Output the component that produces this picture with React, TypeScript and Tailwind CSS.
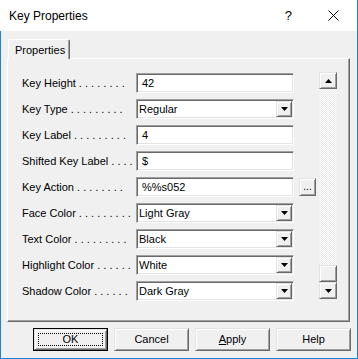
import React from 'react';

const sunken =
  'border border-t-[#a0a0a0] border-l-[#a0a0a0] border-r-white border-b-white shadow-[inset_1px_1px_0_#696969,inset_-1px_-1px_0_#e3e3e3] bg-white';
const raised =
  'border border-t-[#e3e3e3] border-l-[#e3e3e3] border-r-[#696969] border-b-[#696969] shadow-[inset_1px_1px_0_#ffffff,inset_-1px_-1px_0_#a0a0a0] bg-[#f0f0f0]';

const Arrow = ({ up }: { up?: boolean }) => (
  <svg width="7" height="4" viewBox="0 0 7 4">
    <polygon points={up ? '3.5,0 7,4 0,4' : '0,0 7,0 3.5,4'} fill="#000" />
  </svg>
);

type Row = { label: string; value: string; kind: 'text' | 'select' | 'action' };

const rows: Row[] = [
  { label: 'Key Height . . . . . . . .', value: '42', kind: 'text' },
  { label: 'Key Type . . . . . . . . .', value: 'Regular', kind: 'select' },
  { label: 'Key Label . . . . . . . . .', value: '4', kind: 'text' },
  { label: 'Shifted Key Label . . . .', value: '$', kind: 'text' },
  { label: 'Key Action . . . . . . . .', value: '%%s052', kind: 'action' },
  { label: 'Face Color . . . . . . . . .', value: 'Light Gray', kind: 'select' },
  { label: 'Text Color . . . . . . . . .', value: 'Black', kind: 'select' },
  { label: 'Highlight Color . . . . . .', value: 'White', kind: 'select' },
  { label: 'Shadow Color . . . . . .', value: 'Dark Gray', kind: 'select' },
];

const Field = ({ row }: { row: Row }) => {
  if (row.kind === 'select') {
    return (
      <div className={`${sunken} w-[158px] h-[20px] flex items-center p-px`}>
        <span className="flex-1 pl-px leading-none">{row.value}</span>
        <div className={`${raised} w-[16px] h-[16px] flex items-center justify-center`}>
          <Arrow />
        </div>
      </div>
    );
  }
  return (
    <div className="flex items-center">
      <div className={`${sunken} w-[158px] h-[20px] flex items-center pl-[5px]`}>
        <span className="leading-none">{row.value}</span>
      </div>
      {row.kind === 'action' && (
        <div className={`${raised} ml-[5px] w-[17px] h-[18px] flex items-end justify-center pb-[3px] leading-none text-[10px]`}>
          ...
        </div>
      )}
    </div>
  );
};

const Btn = ({ children, def }: { children: React.ReactNode; def?: boolean }) => (
  <div className={`w-[75px] h-[23px] ${def ? 'border border-black' : ''}`}>
    <div className={`${raised} w-full h-full flex items-center justify-center ${def ? 'p-[3px]' : ''}`}>
      {def ? (
        <div className="w-full h-full border border-dotted border-black flex items-center justify-center">
          {children}
        </div>
      ) : (
        children
      )}
    </div>
  </div>
);

export default function App() {
  return (
    <div className="w-[358px] h-[359px] bg-white border-r border-b border-[#1883d7] font-['Liberation_Sans',Arial,sans-serif] text-[11px] text-black overflow-hidden">
      {/* Title bar */}
      <div className="h-[31px] flex items-center pl-[9px] bg-white">
        <span className="text-[12px] flex-1">Key Properties</span>
        <span className="text-[13px] mr-[36px]">?</span>
        <svg width="11" height="11" viewBox="0 0 11 11" className="mr-[18px]">
          <path d="M0.5 0.5 L10.5 10.5 M10.5 0.5 L0.5 10.5" stroke="#000" strokeWidth="1" />
        </svg>
      </div>

      {/* Body */}
      <div className="h-[327px] bg-[#f0f0f0] border-l border-[#1883d7] pl-[6px] pr-[6px] pt-[8px] flex flex-col">
        {/* Tab */}
        <div className="flex">
          <div className="relative z-10 ml-px w-[62px] h-[20px] -mb-px bg-[#f0f0f0] border-t border-l border-white border-r border-r-[#696969] rounded-t-[2px] shadow-[inset_-1px_0_0_#a0a0a0] pl-[6px] pt-[2px]">
            Properties
          </div>
        </div>

        {/* Panel */}
        <div className="w-[343px] h-[264px] border border-t-white border-l-white border-r-[#696969] border-b-[#696969] shadow-[inset_-1px_-1px_0_#a0a0a0] flex items-start pl-[14px] pt-[13px]">
          <div className="w-[297px] mt-px flex flex-col gap-[6px]">
            {rows.map((r) => (
              <div key={r.label} className="h-[20px] flex items-center">
                <div className="w-[114px] shrink-0 whitespace-pre">{r.label}</div>
                <Field row={r} />
              </div>
            ))}
          </div>

          {/* Scrollbar */}
          <div className="w-[18px] h-[227px] flex flex-col bg-[repeating-conic-gradient(#ffffff_0%_25%,#e8e8e8_0%_50%)] bg-[length:2px_2px]">
            <div className={`${raised} h-[17px] flex items-center justify-center`}>
              <Arrow up />
            </div>
            <div className="flex-1" />
            <div className={`${raised} h-[17px]`} />
            <div className={`${raised} h-[17px] flex items-center justify-center`}>
              <Arrow />
            </div>
          </div>
        </div>

        {/* Buttons */}
        <div className="mt-[6px] flex justify-end gap-[6px]">
          <Btn def>OK</Btn>
          <Btn>Cancel</Btn>
          <Btn>
            <span>
              <span className="underline">A</span>pply
            </span>
          </Btn>
          <Btn>Help</Btn>
        </div>
      </div>
    </div>
  );
}
